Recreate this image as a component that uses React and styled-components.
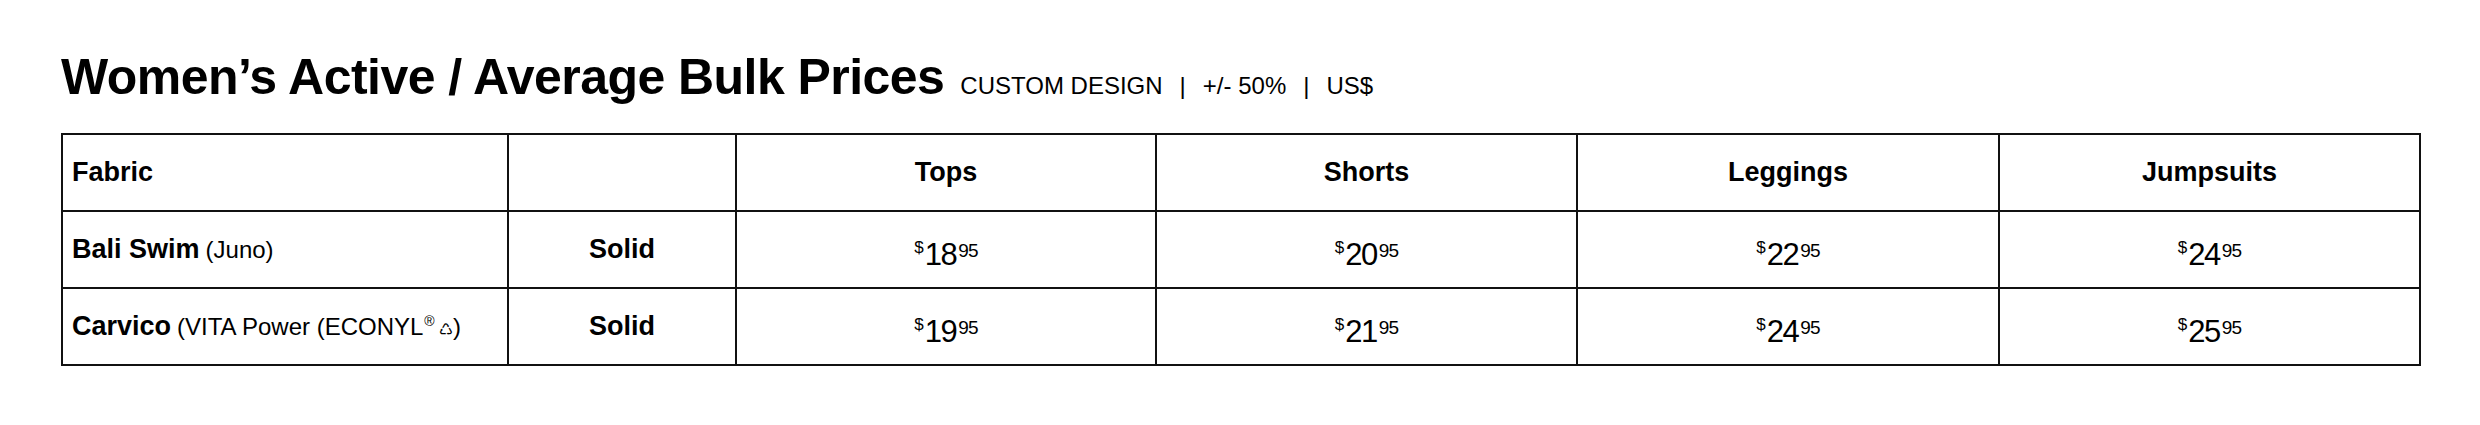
import React from "react";
import styled, { createGlobalStyle } from "styled-components";

const GlobalStyle = createGlobalStyle`
  html, body {
    margin: 0;
    padding: 0;
    background: #ffffff;
  }
  body {
    font-family: "Liberation Sans", Arial, sans-serif;
    color: #000;
  }
`;

const Page = styled.div`
  padding: 50px 61px 40px 61px;
  box-sizing: border-box;
  width: 2480px;
`;

const Header = styled.div`
  display: flex;
  align-items: baseline;
  gap: 16px;
`;

const Title = styled.h1`
  margin: 0;
  font-size: 50px;
  line-height: 55px;
  font-weight: 700;
  letter-spacing: -0.55px;
  color: #000;
`;

const Meta = styled.div`
  display: flex;
  align-items: baseline;
  font-size: 24px;
  line-height: 28px;
  color: #000;
`;

const Sep = styled.span`
  margin: 0 17px;
`;

const Table = styled.table`
  margin-top: 28px;
  width: 2358px;
  table-layout: fixed;
  border-collapse: collapse;
  border: 2px solid #111;
`;

const Cell = styled.td`
  border: 2px solid #111;
  height: 77px;
  padding: 0 9px;
  box-sizing: border-box;
  vertical-align: middle;
  text-align: ${(p) => (p.$left ? "left" : "center")};
  font-size: 27px;
  font-weight: ${(p) => (p.$bold ? 700 : 400)};
  color: #000;
  white-space: nowrap;
`;

const HeadCell = styled(Cell).attrs({ as: "th" })``;

const Note = styled.span`
  font-size: 24px;
  font-weight: 400;
  margin-left: 6px;
`;

const Reg = styled.span`
  display: inline-block;
  font-size: 14px;
  line-height: 1;
  vertical-align: 9px;
  margin-left: 1px;
`;

const Recycle = styled.span`
  font-family: "DejaVu Sans", sans-serif;
  font-size: 16px;
  margin-left: 4px;
`;

const Price = styled.span`
  display: inline-flex;
  align-items: flex-start;
  line-height: 1;
  font-weight: 400;
`;

const Dollar = styled.span`
  font-size: 17px;
  line-height: 1;
  margin-top: 0px;
  margin-right: 1px;
`;

const Whole = styled.span`
  font-size: 31px;
  line-height: 1;
  letter-spacing: -1.5px;
`;

const Cents = styled.span`
  font-size: 19px;
  line-height: 1;
  margin-top: 2px;
  margin-left: 2px;
  letter-spacing: -0.8px;
`;

const columns = ["Tops", "Shorts", "Leggings", "Jumpsuits"];
const widths = [446, 228, 420, 421, 422, 421];

const rows = [
  {
    name: "Bali Swim",
    note: <>(Juno)</>,
    finish: "Solid",
    prices: ["18", "20", "22", "24"],
  },
  {
    name: "Carvico",
    note: (
      <>
        (VITA Power (ECONYL<Reg>®</Reg>
        <Recycle>♺</Recycle>)
      </>
    ),
    finish: "Solid",
    prices: ["19", "21", "24", "25"],
  },
];

function PriceTag({ whole, cents }) {
  return (
    <Price>
      <Dollar>$</Dollar>
      <Whole>{whole}</Whole>
      <Cents>{cents}</Cents>
    </Price>
  );
}

export default function App() {
  return (
    <>
      <GlobalStyle />
      <Page>
        <Header>
          <Title>Women’s Active / Average Bulk Prices</Title>
          <Meta>
            <span>CUSTOM DESIGN</span>
            <Sep>|</Sep>
            <span>+/- 50%</span>
            <Sep>|</Sep>
            <span>US$</span>
          </Meta>
        </Header>
        <Table>
          <colgroup>
            {widths.map((w, i) => (
              <col key={i} style={{ width: w }} />
            ))}
          </colgroup>
          <thead>
            <tr>
              <HeadCell $left $bold>
                Fabric
              </HeadCell>
              <HeadCell $bold />
              {columns.map((c) => (
                <HeadCell key={c} $bold>
                  {c}
                </HeadCell>
              ))}
            </tr>
          </thead>
          <tbody>
            {rows.map((r) => (
              <tr key={r.name}>
                <Cell $left $bold>
                  {r.name}
                  <Note>{r.note}</Note>
                </Cell>
                <Cell $bold>{r.finish}</Cell>
                {r.prices.map((p, i) => (
                  <Cell key={i}>
                    <PriceTag whole={p} cents="95" />
                  </Cell>
                ))}
              </tr>
            ))}
          </tbody>
        </Table>
      </Page>
    </>
  );
}
